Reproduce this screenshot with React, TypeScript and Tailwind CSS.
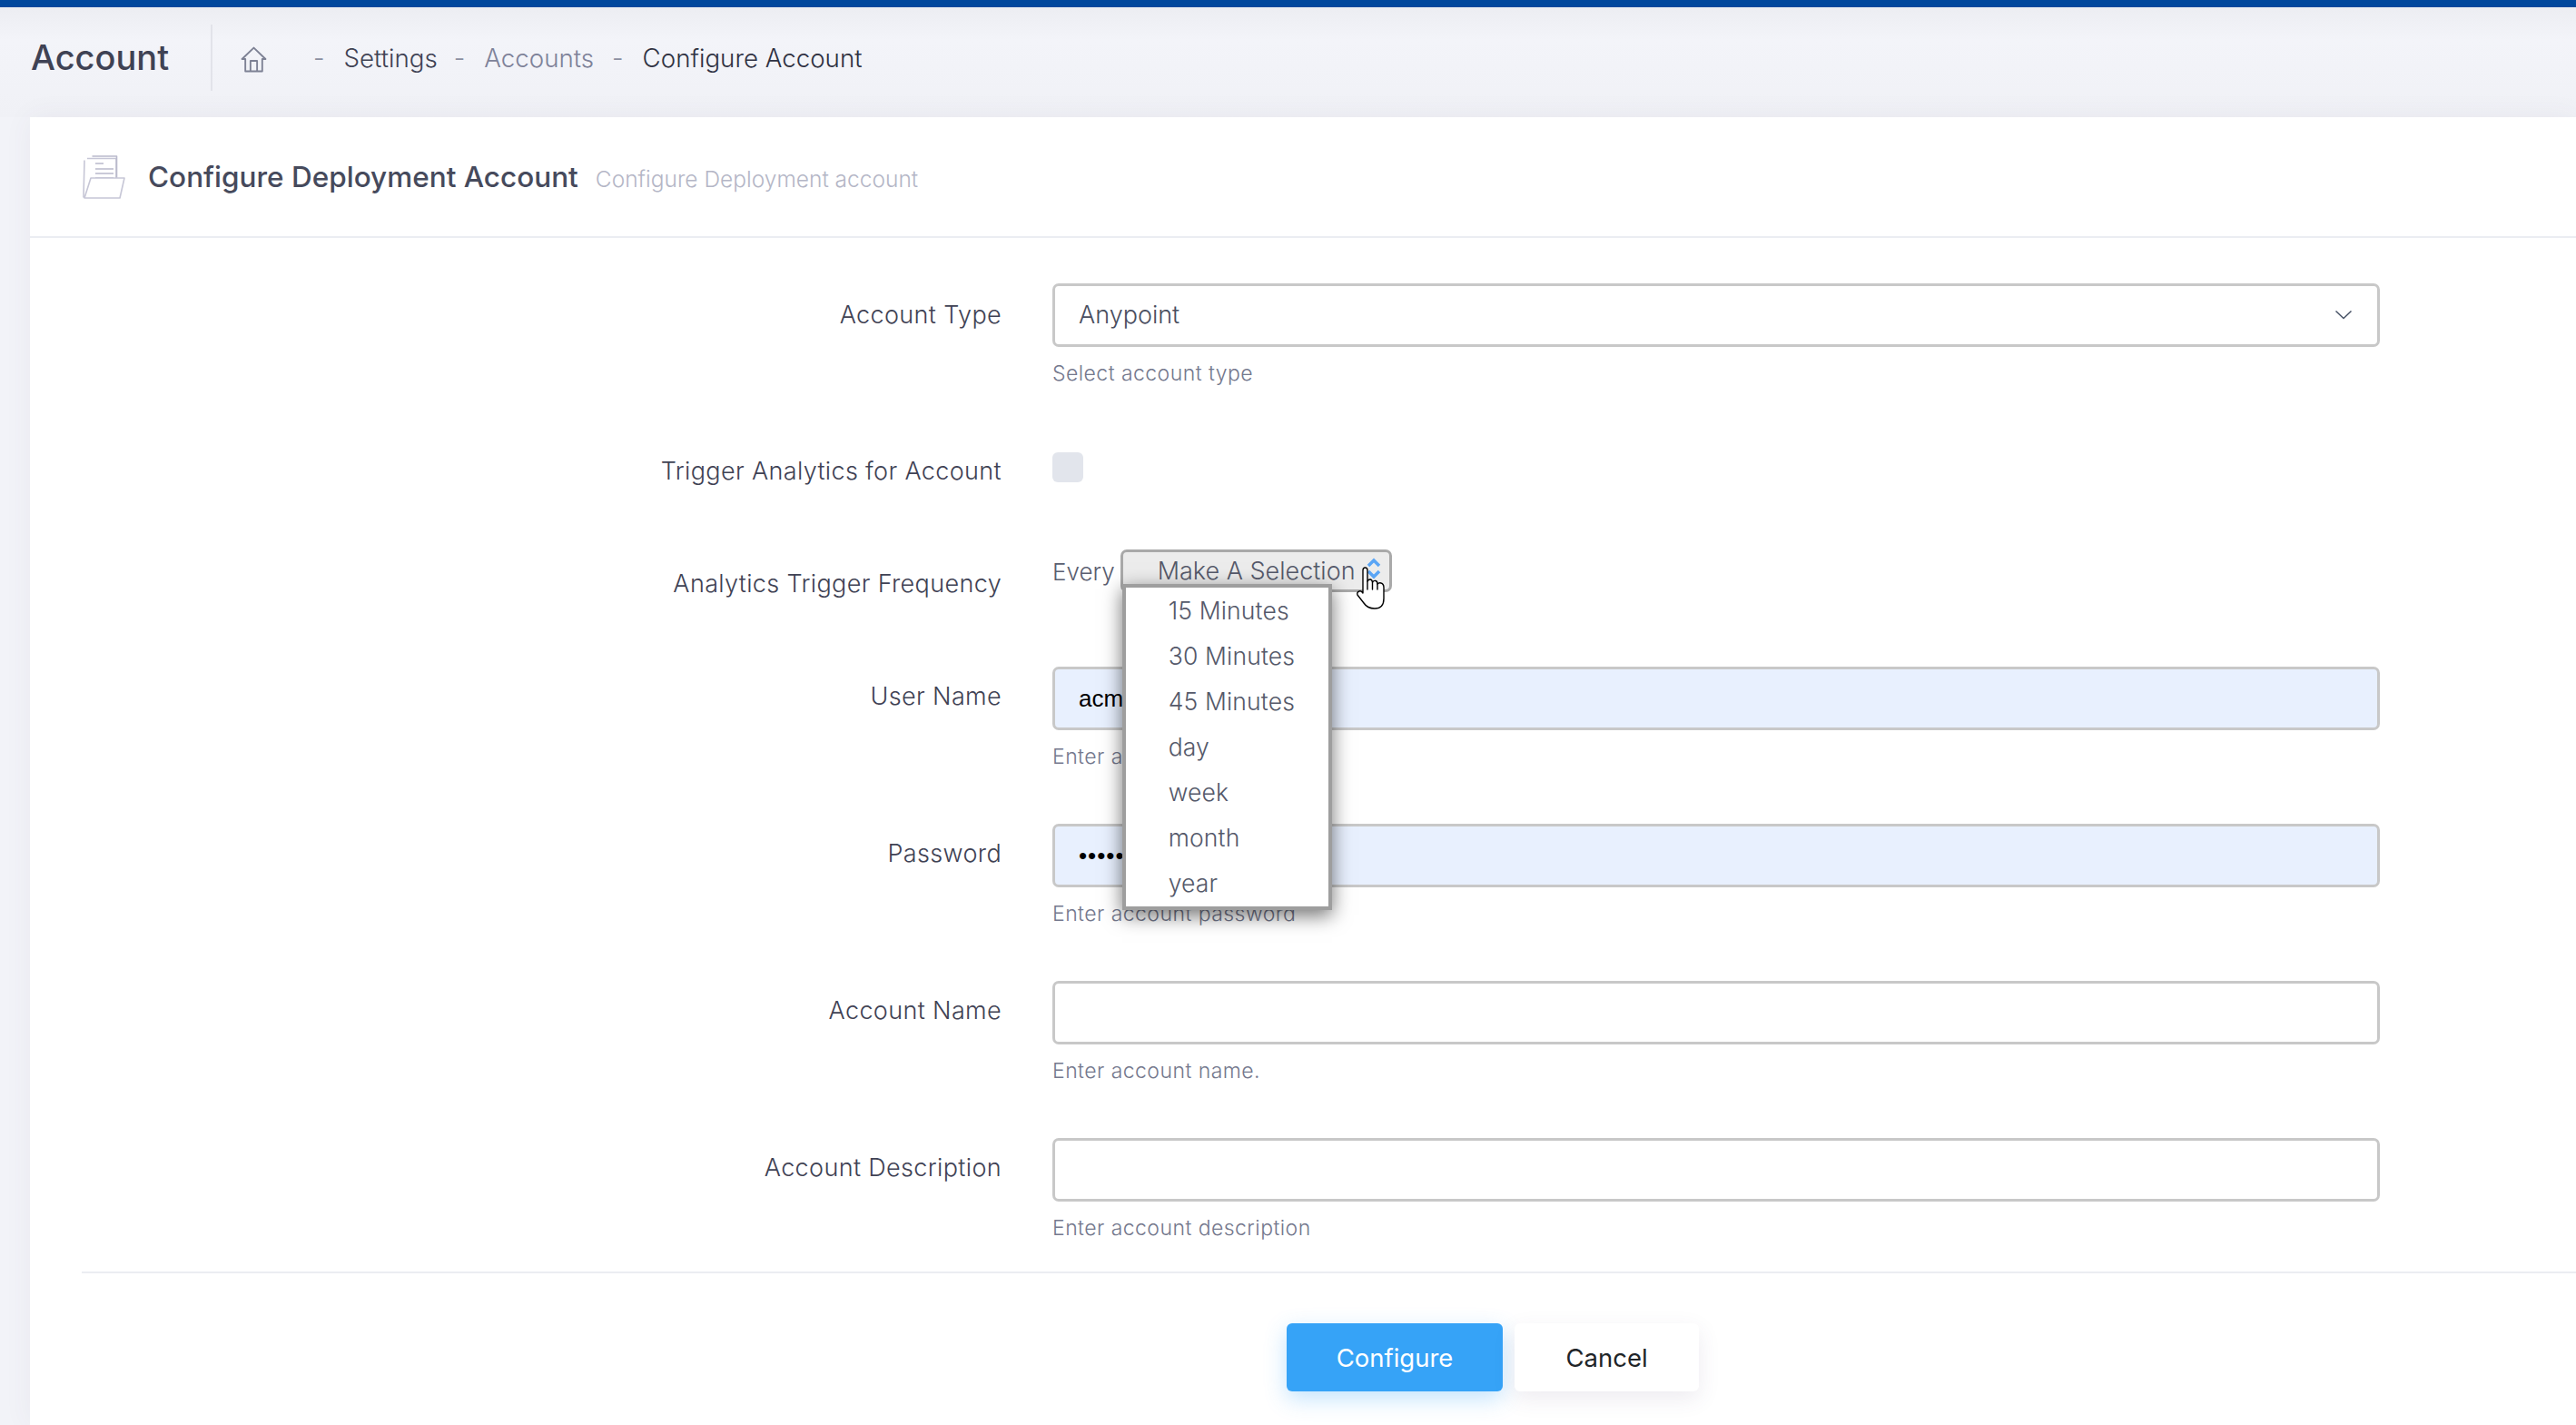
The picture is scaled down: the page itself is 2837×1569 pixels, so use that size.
const font = "font-['Inter','Noto_Sans',sans-serif]";

function Row({ label, labelTop, height, children }: { label: string; labelTop: string; height: string; children: React.ReactNode }) {
  return (
    <div className={`flex items-start ${height}`}>
      <label className={`w-[1070px] text-right text-[27px] leading-[40px] font-light tracking-[0.35px] text-[#3f4254] ${labelTop}`}>{label}</label>
      <div className="ml-[56px] w-[1462px]">{children}</div>
    </div>
  );
}

function Help({ children }: { children: React.ReactNode }) {
  return <div className="mt-[14px] text-[23px] leading-[30px] font-light tracking-[0.45px] text-[#74788d]">{children}</div>;
}

function Field({ value, fill, dots }: { value?: string; fill?: boolean; dots?: boolean }) {
  return (
    <div className={`flex h-[70px] items-center rounded-[7px] border-[3px] border-[#c8c8c8] pl-[26px] font-['Liberation_Sans',sans-serif] text-[26px] text-black ${fill ? "bg-[#e8f0fe]" : "bg-white"} ${dots ? "tracking-[1px]" : ""}`}>
      {value}
    </div>
  );
}

const options = ["15 Minutes", "30 Minutes", "45 Minutes", "day", "week", "month", "year"];

export default function App() {
  return (
    <div className={`${font} flex h-[1569px] w-[2837px] flex-col overflow-hidden bg-[#f2f3f8]`}>
      <div className="h-[8px] bg-[#00479d]" />
      <div className="flex h-[121px] items-start bg-gradient-to-b from-[#ecedf2] from-0% via-[#f3f4f9] via-30% to-[#f0f1f6] pl-[34px]">
        <div className="mt-[19px] flex h-[73px] w-[200px] items-center border-r-2 border-[#e2e3ea] text-[38px] font-medium text-[#3f4254]">
          Account
        </div>
        <div className="mt-[19px] flex h-[73px] items-center pt-[3px] text-[27.700px] font-light text-[#3f4254]">
          <svg className="ml-[31px] h-[29px] w-[29px]" viewBox="0 0 28 28" fill="none" stroke="#7d8194" strokeWidth="1.8" strokeLinejoin="round">
            <path d="M1.5 13.5 14 1.5l12.5 12H23v13H5v-13Z" />
            <path d="M10.5 26.5V15.5h7v11" />
          </svg>
          <span className="ml-[51px] text-[#8a8ea0]">-</span>
          <span className="ml-[21px]">Settings</span>
          <span className="ml-[18px] text-[#8a8ea0]">-</span>
          <span className="ml-[21px] text-[#7e8299]">Accounts</span>
          <span className="ml-[20px] text-[#8a8ea0]">-</span>
          <span className="ml-[21px] text-[#2f3142]">Configure Account</span>
        </div>
      </div>

      <div className="ml-[33px] flex-1 bg-white shadow-[0_0_30px_rgba(82,63,105,0.06)]">
        <div className="flex h-[133px] items-center border-b-2 border-[#ebedf2] pl-[57px]">
          <svg className="h-[48px] w-[48px]" viewBox="0 0 48 48" fill="none" stroke="#c6c6d6" strokeWidth="1.6" strokeLinejoin="round">
            <path d="M3 5.5 2 46h3" />
            <path d="M6 3.5h32v24" />
            <path d="M11.5 1h27v26" stroke="#b9b9cb" />
            <path d="M15 9h9M15 15h20M15 20h20M15 25h20" stroke="#b9b9cb" />
            <path d="M10 25h37l-5 22H3Z" fill="#fff" />
          </svg>
          <div className="ml-[25px] text-[31.5px] font-medium text-[#464a5c]">Configure Deployment Account</div>
          <div className="ml-[19px] pt-[5px] text-[24.5px] font-light text-[#b4b6c6]">Configure Deployment account</div>
        </div>

        <div className="relative pt-[50px]">
          <Row label="Account Type" labelTop="mt-[15px]" height="h-[186px]">
            <div className="flex h-[70px] items-center justify-between rounded-[7px] border-[3px] border-[#c8c8c8] pl-[26px] pr-[28px] text-[27px] font-light text-[#4a4e60]">
              Anypoint
              <svg className="h-[10px] w-[18px]" viewBox="0 0 18 10" fill="none" stroke="#4a5568" strokeWidth="1.5">
                <path d="M.5.5l8.5 8 8.500-8" />
              </svg>
            </div>
            <Help>Select account type</Help>
          </Row>
          <Row label="Trigger Analytics for Account" labelTop="mt-[1px]" height="h-[107px]">
            <div className="h-[33px] w-[34px] rounded-[6px] bg-[#e2e5ec]" />
          </Row>
          <Row label="Analytics Trigger Frequency" labelTop="mt-[18px]" height="h-[129px]">
            <div className="flex h-[47px] items-center text-[26px] font-light text-[#5a5e70]">
              <span className="pt-[2px]">Every</span>
              <div className="relative ml-[6px] flex h-[47px] w-[299px] items-center rounded-[7px] border-[3px] border-[#a9a9a9] bg-[#ececec] pl-[38px]">
                <span className="pt-[2px] text-[27px] text-[#55596a]">Make A Selection</span>
                <svg className="absolute right-[9px] top-[6px] h-[24px] w-[16px]" viewBox="0 0 16 24" fill="none" stroke="#5aa5f5" strokeWidth="3.5">
                  <path d="M2 9l6-6 6 6" />
                  <path d="M2 15l6 6 6-6" />
                </svg>
                <svg className="absolute right-[4px] top-[15px] z-20 h-[48px] w-[33px]" viewBox="0 0 31 48" fill="#fff" stroke="#000" strokeWidth="1.4" strokeLinejoin="round" strokeLinecap="round">
                  <path d="M7 30V5Q7 2 9.500 2 12 2 12 5V17Q13 15 15 15 17 15 17.500 18 19 16 21 16.500 23 17 23 20 25 18 27 19 30 20 30 24V36Q30 47 20 47 12 47 8 41L1 32Q0 29 3 28 5 27 7 30Z" />
                  <path d="M12 17V26M17.500 18V26M23 20V26" fill="none" />
                </svg>
                <div className="absolute left-[-1px] top-[35px] z-10 h-[359px] w-[231px] border-4 border-[#9e9e9e] bg-white pl-[47px] shadow-[0_6px_20px_rgba(0,0,0,0.55)]">
                  {options.map((o) => (
                    <div key={o} className="h-[50px] text-[26.5px] leading-[50px] font-light tracking-[0.15px] text-[#55596a]">{o}</div>
                  ))}
                </div>
              </div>
            </div>
          </Row>
          <Row label="User Name" labelTop="mt-[13px]" height="h-[173px]">
            <Field value="acme" fill />
            <Help>Enter account username</Help>
          </Row>
          <Row label="Password" labelTop="mt-[13px]" height="h-[173px]">
            <Field value="••••••••" fill dots />
            <Help>Enter account password</Help>
          </Row>
          <Row label="Account Name" labelTop="mt-[13px]" height="h-[173px]">
            <Field />
            <Help>Enter account name.</Help>
          </Row>
          <Row label="Account Description" labelTop="mt-[13px]" height="h-[147px]">
            <Field />
            <Help>Enter account description</Help>
          </Row>
        </div>

        <div className="ml-[57px] h-[2px] bg-[#ebedf2]" />
        <div className="mt-[55px] flex pl-[1384px] text-[27.500px]">
          <button className="h-[75px] w-[238px] rounded-[6px] bg-[#36a3f7] pt-[2px] font-normal text-white shadow-[0_8px_25px_rgba(54,163,247,0.3)]">Configure</button>
          <button className="ml-[13px] h-[75px] w-[203px] rounded-[6px] bg-white pt-[2px] font-normal text-[#212529] shadow-[0_8px_25px_rgba(82,63,105,0.1)]">Cancel</button>
        </div>
      </div>
    </div>
  );
}
